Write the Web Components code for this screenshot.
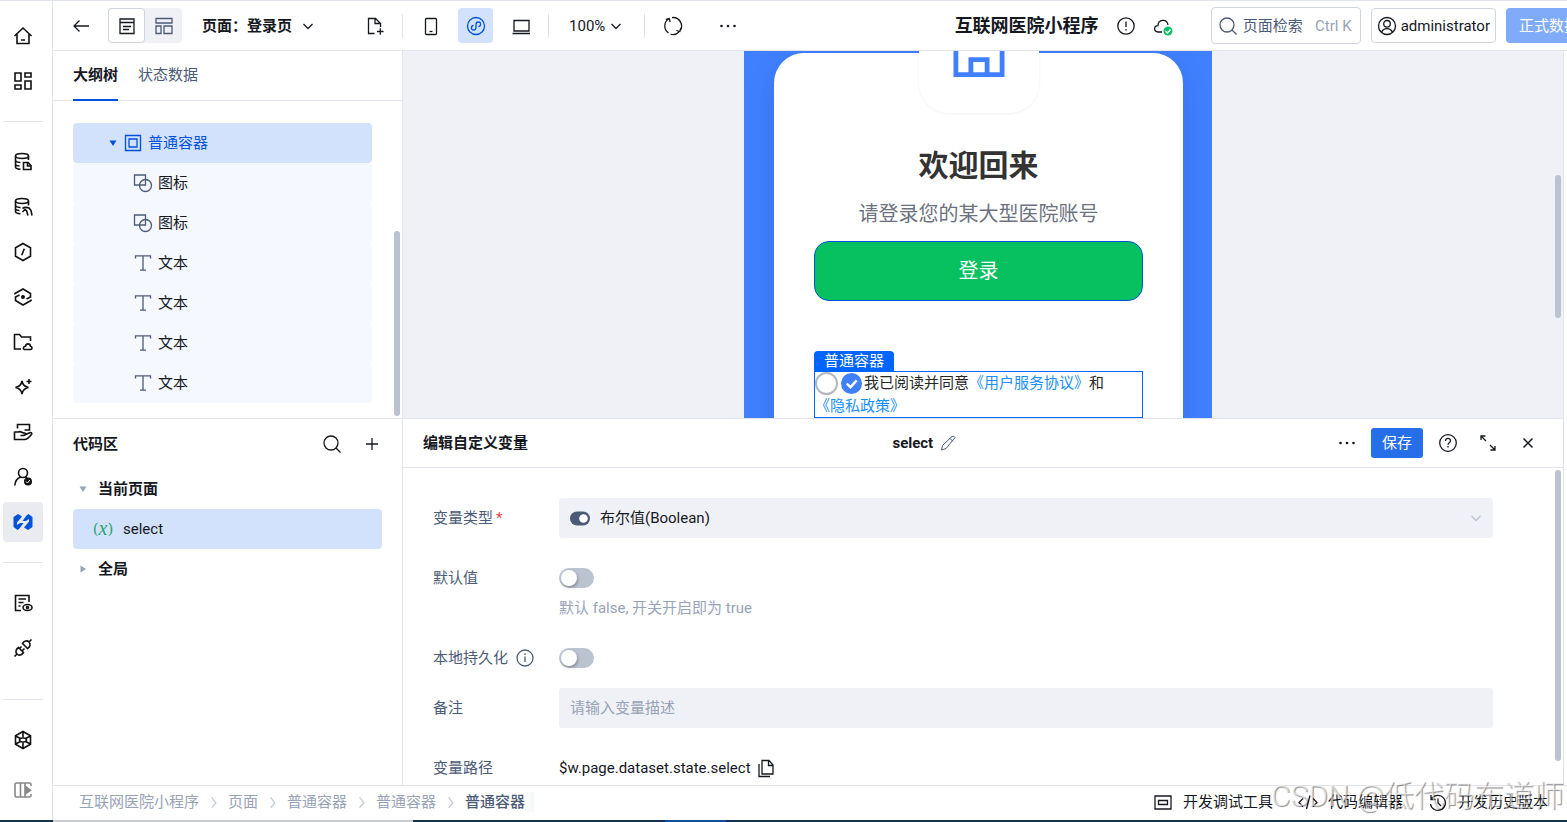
<!DOCTYPE html>
<html lang="zh-CN">
<head>
<meta charset="utf-8">
<title>互联网医院小程序</title>
<style>
:root {
    --text: #16181f;
    --muted: #4b5b76;
    --faint: #97a3b7;
    --line: #e1e4eb;
    --brand: #0052d9;
    --selected: #d3e2fc;
    --field: #f0f1f6;
    --scroll: #bbc3d0;
}

body {
    margin: 0;
    font: 15px/20px Roboto, "Noto Sans CJK SC", sans-serif;
    color: var(--text);
    background: #fff;
}
</style>
</head>
<body>
<app-shell></app-shell>

<script>
const define = (name, html, setup) => {
    const template = document.createElement('template');
    template.innerHTML = html;
    customElements.define(name, class extends HTMLElement {
        constructor() {
            super();
            this.attachShadow({mode: 'open'});
            this.shadowRoot.appendChild(template.content.cloneNode(true));
        }
        connectedCallback() {
            if (setup) setup(this, this.shadowRoot);
        }
    });
};

// every icon is drawn on a 20 x 20 grid
const icons = {
    home: '<path d="M1.5 10 10 2l8.500 8M4 8v9.500h12V8M8 14h4"/>',
    apps: '<path d="M2 2h6v8H2zM12 2h6v4h-6zM2 14h6v4H2zM12 10h6v8h-6z"/>',
    dbFile: '<ellipse cx="9" cy="4" rx="6.500" ry="2.500"/><path d="M2.500 4v11c0 1.200 2 2 5 2.200M15.500 4v4M2.500 8.500c.5 1 2.500 2 5 2M2.500 12.500c.5 1 2 1.500 4 1.500M10.500 10.500h4.500l3 3v4h-7.500zM14.500 10.500v3.500h3.500"/>',
    dbHand: '<ellipse cx="9" cy="4" rx="6.500" ry="2.500"/><path d="M2.500 4v10.500c0 1.200 2 2 5 2.200M15.500 4v4.500M2.500 8.500c.5 1 2.500 2 5 2M2.500 12c.5 1 2 1.500 4 1.500M15 18.500l-1.500-5-1.500-1-2.500 2.500M9.500 11.500c2-1.500 4-1.500 6.500-.5l2 2.500 1 5"/>',
    hexSlash: '<path d="M10 1.500 17.500 5.700v8.600L10 18.500l-7.500-4.200V5.700zM11.300 6.800 8.700 13.200"/>',
    hexDot: '<path d="M2 7.500V6.500L10 2l7.500 4.500v3.500l-4 2M18 12.500v1L10 18l-7.500-4.500v-3.500l4-2"/><circle cx="10" cy="10" r="1.200" fill="currentColor"/>',
    folder: '<path d="M8 17H1.500V2.500h5l2 2.500h9v4M11.500 17.500h6c2 0 2-3 0-3.200-.3-3.200-4.500-3.200-5 0-2.500 0-2.700 3-1 3.200z"/>',
    sparkle: '<path d="M9 4c.7 4 2.500 5.700 6.500 6.500C11.500 11.200 9.700 13 9 17c-.7-4-2.500-5.800-6.500-6.500C6.500 9.700 8.300 8 9 4zM16 2v5M13.500 4.500h5"/>',
    handCard: '<path d="M4.500 6.500V2.500h12v5.500h-5M1.500 10h4c2-1.500 3.500 1 6 1 2 0 1.500 2.500-1 2.500H7.500M1.500 9.500v8h10c3 0 5-2.500 7-5 1-1.500-1-2.500-2.500-1.500l-5.500 2.500"/>',
    userCheck: '<circle cx="10" cy="6" r="4.500"/><path d="M7.500 10C4 11.500 2 15 1.800 18.500M12.500 10l1.500 1"/><circle cx="15" cy="14.500" r="4" fill="currentColor" stroke="none"/><path stroke="#fff" stroke-width="1" d="m13 14.500 1.500 1.500 2.500-3"/>',
    wedge: '<path fill="currentColor" stroke="none" d="M.5 5 5 2l4 2.500-5 6V13l3-2h3.500l-4 5.500-2 1.500L.5 15zM19.500 15 15 18l-4-2.500 5-6V7l-3 2H9.500l4-5.500 2-1.500 4 3z"/>',
    docEye: '<path d="M8 17.500H2.500v-15h13.500V9M5.500 6h7.500M5.500 9.500h5M5.500 13h2"/><ellipse cx="14.500" cy="14.500" rx="4.500" ry="3"/><circle cx="14.500" cy="14.500" r="1"/>',
    plug: '<path d="m1.500 18.500 2.500-2.500M4 16c-2-2-1-5 1.500-6.500l5 5C9 17 6 18 4 16zM11.500 10.500l-2 2M8.500 8.500l-2 2M16 4l2.500-2.500M16 4c2 2 1 5-1.500 6.500l-5-5C11 3 14 2 16 4z"/>',
    wheel: '<path d="M10 1.500 17.500 5.700v8.600L10 18.500l-7.500-4.200V5.700zM10 1.500v6M10 12.500v6M2.500 6l5 2.500M12.500 11.500l5 2.500M17.500 6l-5 2.500M7.500 11.500l-5 2.500"/><ellipse cx="10" cy="10" rx="3.500" ry="2"/>',
    collapse: '<path d="M18 6V4.500q0-1.500-1.500-1.500h-13Q2 3 2 4.500v11Q2 17 3.500 17h13q1.500 0 1.500-1.500V14M7.500 3v14M12 3v14"/><path fill="currentColor" d="m13 7 4.500 3.200-4.500 3.200z"/>',
    back: '<path d="M18 10H3M8.500 4.500 3 10l5.500 5.500"/>',
    layoutPage: '<path d="M3 3h14v14.500h-14zM3 6.500h14M6 10.500h8M6 13.500h6"/>',
    layoutGrid: '<path d="M2 2.500h16v4.500H2zM2 10h5v7.500H2zM10 10h8v7.500h-8z"/>',
    chevron: '<path d="m5.500 8 4.500 4.500L14.500 8"/>',
    chevronRight: '<path d="m8 5 4.500 6L8 16"/>',
    fileAdd: '<path d="M9.500 17.500H3.500v-15h7l5 5v3.500M10 2.500V7.500h5.500M12 15.500h6.500M15.300 12.300v6.500"/>',
    phone: '<rect x="4.500" y="2.500" width="11" height="16" rx="1"/><path d="M8.500 15.500h3"/>',
    mini: '<circle cx="10" cy="10" r="8.500"/><path d="M7.500 9.500C5 9.500 4.500 14 7.500 14c1.500 0 2.500-1 2.500-2.500v-3C10 7 11 6 12.500 6c3 0 2.500 4.500 0 4.500"/>',
    laptop: '<path d="M3 4.500h15v10.500H3zM1.500 17.500H19"/>',
    refresh: '<path d="M6.200 2.500A8.500 8.500 0 0 0 5.500 17M7.500 18c3 1.200 6 .5 8.500-2M9 1.600a8.500 8.500 0 0 1 7.800 13.600M2.800 3.300l3.500-.8.8 3.500M17.800 12l-1 3.500-3.500-1"/>',
    dots: '<g fill="currentColor" stroke="none"><circle cx="3.500" cy="10" r="1.300"/><circle cx="10" cy="10" r="1.300"/><circle cx="16.500" cy="10" r="1.300"/></g>',
    warn: '<circle cx="10" cy="10" r="8.200"/><path d="M10 5.500V11M10 13v1.500"/>',
    cloud: '<path d="M9 16H5c-4.500-.3-4.500-6 0-6.300C5 3 14 2.500 15 9"/><circle cx="15" cy="15" r="4.500" fill="#0abf6a" stroke="none"/><path stroke="#fff" d="m12.500 15 2 2 3-3.500"/>',
    search: '<circle cx="9" cy="9" r="7"/><path d="m14 14 4.500 4.500"/>',
    user: '<circle cx="10" cy="10" r="8.500"/><circle cx="10" cy="7.800" r="3.300"/><path d="M4.500 16.300c2-5 9-5 11 0"/>',
    plus: '<path d="M10 4v12M4 10h12"/>',
    box: '<path d="M2.500 2.500h15v15h-15z"/><path d="M6 6h8v8H6z"/>',
    shapes: '<path d="M1.500 2H12.500V12H1.500z"/><circle cx="12.500" cy="12.500" r="6"/>',
    letter: '<path d="M2.500 5.500V2.800h15v2.700M10 2.800V17M7 17.200h6"/>',
    down: '<path fill="currentColor" stroke="none" d="M6.500 7.500h7L10 13z"/>',
    right: '<path fill="currentColor" stroke="none" d="M7.500 6.500v7L13 10z"/>',
    pencil: '<path stroke-width="1" d="m3.500 17 1-4.500L14 3.500q2-1 3 1L8 15.500zM12 5.500l3 3"/>',
    help: '<circle cx="10" cy="10" r="8.300"/><path d="M7.500 8c0-3.500 5-3.500 5-.3 0 2-2.500 2-2.500 4M10 13v1.500"/>',
    expand: '<path d="M3 7V3h4.500M3 3l5 5M17 13v4h-4.500M17 17l-5-5"/>',
    close: '<path stroke-width="1.500" d="m5.500 5.500 9 9M14.500 5.500l-9 9"/>',
    info: '<circle cx="10" cy="10" r="8"/><path d="M10 5.300V7M10 8.500V14"/>',
    copy: '<path d="M6 2.500h7l4 4.500v9H6zM12.500 2.500V7.500H17M3 6v12.500h11"/>',
    boolean: '<rect x="0" y="3.500" width="20" height="14" rx="7" fill="currentColor" stroke="none"/><circle cx="13.500" cy="10.500" r="4.300" fill="#fff" stroke="none"/>',
    debug: '<path d="M2 4h16v13H2zM5.500 8.500h9v4h-9z"/>',
    code: '<path d="m5 6.500-4 4 4 4M15 6.500l4 4-4 4M12 3.500 8.500 17"/>',
    history: '<path d="M3.500 7a7.500 7.500 0 1 1-1 5M3 3v4.500h4.500M10 6.500V11l3 3"/>',
    store: '<path stroke-width="1.600" d="M2.300 2v15.200h15.400V2M7.300 17.200v-5h5.400v5"/>',
    check: '<circle cx="10" cy="10" r="10" fill="currentColor" stroke="none"/><path stroke="#fff" stroke-width="2.300" d="m5.500 10 3.500 3.500 6-6.500"/>'
};

customElements.define('ui-icon', class extends HTMLElement {
    constructor() {
        super();
        this.attachShadow({mode: 'open'});
    }
    connectedCallback() {
        this.shadowRoot.innerHTML = `
<style>
:host { display: inline-flex; flex: none; width: 20px; height: 20px; }
svg { width: 100%; height: 100%; fill: none; stroke: currentColor; stroke-width: var(--stroke, 1.3); }
</style>
<svg viewBox="0 0 20 20" aria-hidden="true">${icons[this.getAttribute('name')]}</svg>`;
    }
});

define('icon-button', `
<style>
:host { display: block; flex: none; width: 35px; height: 35px; }
button {
    display: flex;
    align-items: center;
    justify-content: center;
    width: 100%;
    height: 100%;
    padding: 0;
    border: 0;
    border-radius: 4px;
    color: inherit;
    background: none;
}
:host([active]) button { color: var(--brand); background: var(--selected); }
</style>
<button><ui-icon></ui-icon></button>
`, (host, root) => {
    root.querySelector('button').setAttribute('aria-label', host.getAttribute('label') || host.getAttribute('icon'));
    const icon = document.createElement('ui-icon');
    icon.setAttribute('name', host.getAttribute('icon'));
    root.querySelector('ui-icon').replaceWith(icon);
});

define('nav-rail', `
<style>
:host {
    display: flex;
    flex-direction: column;
    gap: 5px;
    width: 49px;
    padding: 15px 0 10px 3px;
    border-top: 1px solid var(--line);
    border-right: 1px solid var(--line);
    color: #111;
    --stroke: 1.6;
}
icon-button { width: 40px; height: 40px; }
icon-button[active] { --selected: #e9ebf1; }
hr { width: 40px; margin: 15px 0; border: 0; border-top: 1px solid var(--line); }
.bottom { display: flex; flex-direction: column; gap: 10px; margin-top: auto; }
.bottom hr { margin: 0 0 10px; }
.off { color: #888; }
</style>
<icon-button icon="home"></icon-button>
<icon-button icon="apps"></icon-button>
<hr>
<icon-button icon="dbFile"></icon-button>
<icon-button icon="dbHand"></icon-button>
<icon-button icon="hexSlash"></icon-button>
<icon-button icon="hexDot"></icon-button>
<icon-button icon="folder"></icon-button>
<icon-button icon="sparkle"></icon-button>
<icon-button icon="handCard"></icon-button>
<icon-button icon="userCheck"></icon-button>
<icon-button icon="wedge" active></icon-button>
<hr>
<icon-button icon="docEye"></icon-button>
<icon-button icon="plug"></icon-button>
<div class="bottom">
    <hr>
    <icon-button icon="wheel"></icon-button>
    <icon-button class="off" icon="collapse"></icon-button>
</div>
`);

define('top-bar', `
<style>
:host {
    display: flex;
    align-items: center;
    gap: 10px;
    height: 49px;
    padding-left: 10px;
    border-top: 1px solid var(--line);
    border-bottom: 1px solid var(--line);
    overflow: hidden;
    white-space: nowrap;
}
select, input { font: inherit; color: inherit; border: 0; padding: 0; background: none; outline: none; appearance: none; }
.views { display: flex; border-radius: 4px; background: var(--field); }
.views icon-button { width: 37px; }
.views icon-button:first-child { box-shadow: inset 0 0 0 1px #d0d5e0; border-radius: 4px; background: #fff; }
.views icon-button:last-child { color: var(--muted); }
.page { display: flex; align-items: center; gap: 5px; margin-left: 10px; font-weight: 700; }
.page label { margin-right: -5px; }
.file { margin-left: 29px; }
.split { width: 1px; height: 24px; background: var(--line); }
.zoom { display: flex; align-items: center; width: 65px; padding-left: 10px; }
.more { margin-left: 10px; }
.actions { display: flex; align-items: center; gap: 10px; margin: 0 -25px 0 auto; }
h1 { margin: 0; font-size: 18px; line-height: 24px; }
.cloud { margin-left: -8px; }
.search {
    display: flex;
    align-items: center;
    gap: 5px;
    box-sizing: border-box;
    width: 150px;
    height: 37px;
    margin-left: 20px;
    padding: 0 8px 0 6px;
    border: 1px solid #d0d5e0;
    border-radius: 4px;
    color: var(--muted);
}
.search input { flex: 1; min-width: 0; }
.search input::placeholder { color: var(--muted); opacity: 1; }
kbd { font: inherit; color: var(--faint); }
.user, .publish { height: 35px; font: inherit; border-radius: 4px; }
.user { display: flex; align-items: center; gap: 4px; padding: 0 5px; border: 1px solid #d0d5e0; color: inherit; background: #fff; }
.publish { padding: 0 13px; border: 0; color: #fff; background: #7fabf8; }
</style>
<icon-button icon="back" label="返回"></icon-button>
<div class="views">
    <icon-button icon="layoutPage"></icon-button>
    <icon-button icon="layoutGrid"></icon-button>
</div>
<div class="page">
    <label for="page">页面：</label>
    <select id="page"><option>登录页</option></select>
    <ui-icon name="chevron"></ui-icon>
</div>
<icon-button class="file" icon="fileAdd"></icon-button>
<span class="split"></span>
<icon-button icon="phone"></icon-button>
<icon-button icon="mini" active></icon-button>
<icon-button icon="laptop"></icon-button>
<span class="split"></span>
<div class="zoom">
    <select aria-label="缩放"><option>100%</option></select>
    <ui-icon name="chevron"></ui-icon>
</div>
<span class="split"></span>
<icon-button icon="refresh"></icon-button>
<icon-button class="more" icon="dots"></icon-button>
<div class="actions">
    <h1>互联网医院小程序</h1>
    <icon-button icon="warn"></icon-button>
    <icon-button class="cloud" icon="cloud"></icon-button>
    <div class="search">
        <ui-icon name="search"></ui-icon>
        <input type="text" placeholder="页面检索" aria-label="页面检索">
        <kbd>Ctrl K</kbd>
    </div>
    <button class="user"><ui-icon name="user"></ui-icon>administrator</button>
    <button class="publish">正式数据</button>
</div>
`);

define('tree-row', `
<style>
:host {
    display: flex;
    align-items: center;
    gap: 5px;
    height: 40px;
    border-radius: 4px;
}
:host([selected]) { background: var(--selected); }
</style>
<slot></slot>
`);

define('scroll-thumb', `
<style>
/* floats over the right edge of its panel */
:host { position: absolute; right: 2px; width: 6px; border-radius: 3px; background: var(--scroll); }
</style>
`);

define('outline-panel', `
<style>
:host { display: block; position: relative; overflow: hidden; }
nav { display: flex; gap: 20px; height: 49px; padding-left: 20px; border-bottom: 1px solid var(--line); }
nav button { padding: 0; border: 0; margin-bottom: -1px; border-bottom: 2px solid transparent; font: inherit; color: var(--muted); background: none; }
nav .on { font-weight: 700; color: var(--text); border-color: var(--brand); }
.tree { margin: 22px 30px 0 20px; }
tree-row { padding-left: 60px; background: #f5f8ff; }
tree-row ui-icon { color: var(--muted); }
tree-row[selected] { padding-left: 30px; color: var(--brand); background: var(--selected); }
tree-row[selected] ui-icon { color: var(--brand); }
.caret { margin-right: -5px; }
scroll-thumb { top: 180px; bottom: 2px; }
</style>
<nav>
    <button class="on">大纲树</button>
    <button>状态数据</button>
</nav>
<div class="tree">
    <tree-row selected><ui-icon class="caret" name="down"></ui-icon><ui-icon name="box"></ui-icon>普通容器</tree-row>
    <tree-row><ui-icon name="shapes"></ui-icon>图标</tree-row>
    <tree-row><ui-icon name="shapes"></ui-icon>图标</tree-row>
    <tree-row><ui-icon name="letter"></ui-icon>文本</tree-row>
    <tree-row><ui-icon name="letter"></ui-icon>文本</tree-row>
    <tree-row><ui-icon name="letter"></ui-icon>文本</tree-row>
    <tree-row><ui-icon name="letter"></ui-icon>文本</tree-row>
</div>
<scroll-thumb></scroll-thumb>
`);

define('code-panel', `
<style>
:host { display: block; border-top: 1px solid var(--line); }
header { display: flex; align-items: center; gap: 5px; height: 50px; padding: 0 13px 0 20px; font-weight: 700; }
header span { flex: 1; }
.tree { margin: 0 20px; }
.group { font-weight: 700; }
.group ui-icon { color: var(--faint); }
.item { gap: 10px; padding-left: 20px; }
</style>
<header>
    <span>代码区</span>
    <icon-button icon="search" label="搜索"></icon-button>
    <icon-button icon="plus" label="新增"></icon-button>
</header>
<div class="tree">
    <tree-row class="group"><ui-icon name="down"></ui-icon>当前页面</tree-row>
    <tree-row class="item" selected><ui-var></ui-var>select</tree-row>
    <tree-row class="group"><ui-icon name="right"></ui-icon>全局</tree-row>
</div>
`);

define('ui-var', `
<style>
:host { display: flex; justify-content: center; width: 20px; color: #2ba471; font: 15px/20px "DejaVu Serif", serif; }
i { font-family: "Liberation Serif", serif; font-size: 20px; line-height: 18px; }
</style>
(<i>x</i>)
`);

define('phone-preview', `
<style>
:host {
    display: block;
    position: relative;
    overflow: hidden;
    padding-right: 10px;
    border-left: 1px solid var(--line);
    background: #eff1f6;
}
.phone { width: 409px; height: 100%; margin: 0 auto; padding: 2px 29px 0 30px; background: #4080ff; }
.card {
    box-sizing: border-box;
    height: 600px;
    padding: 0 40px;
    border-radius: 30px;
    background: #fff;
    box-shadow: 0 10px 30px rgba(0, 0, 0, .1);
    text-align: center;
}
/* the badge straddles the top edge of the card */
.logo {
    display: flex;
    align-items: center;
    justify-content: center;
    width: 120px;
    height: 120px;
    margin: 0 auto -30px;
    border-radius: 30px;
    color: #4080ff;
    background: #fff;
    box-shadow: 0 1px 3px rgba(0, 0, 0, .06);
    transform: translateY(-50%);
}
.logo ui-icon { width: 60px; height: 60px; }
h2 { margin: 0; font-size: 30px; line-height: 46px; color: #333; }
p { margin: 10px 0 12px; font-size: 20px; line-height: 30px; color: #6b7280; }
.login { width: 100%; height: 60px; border: 1px solid #0052d9; border-radius: 15px; font: inherit; font-size: 20px; color: #fff; background: #07c160; }
.agree { margin-top: 50px; text-align: left; color: #262626; }
.tag { width: fit-content; padding: 0 10px; border-radius: 4px 4px 0 0; color: #fff; background: #0064ff; }
.frame { box-sizing: border-box; height: 47px; border: 1px solid #0064ff; line-height: 23px; }
.frame ui-icon { width: 21px; height: 21px; margin: 1px 2px 0 0; vertical-align: top; color: #4080ff; }
.frame input { appearance: none; box-sizing: border-box; width: 23px; height: 23px; margin: 0 3px 0 0; border: 2px solid #b4b8be; border-radius: 50%; vertical-align: top; }
.frame a { display: inline-block; color: #1890ff; text-decoration: none; text-spacing-trim: space-all; }
scroll-thumb { top: 124px; height: 143px; }
</style>
<div class="phone">
    <div class="card">
        <div class="logo"><ui-icon name="store"></ui-icon></div>
        <h2>欢迎回来</h2>
        <p>请登录您的某大型医院账号</p>
        <button class="login">登录</button>
        <div class="agree">
            <div class="tag">普通容器</div>
            <div class="frame"><input type="radio" id="agree"><ui-icon name="check"></ui-icon><label for="agree">我已阅读并同意</label><a href="#terms">《用户服务协议》</a>和<a href="#privacy">《隐私政策》</a></div>
        </div>
    </div>
</div>
<scroll-thumb></scroll-thumb>
`);

define('form-row', `
<style>
:host { display: grid; flex: none; grid-template-columns: 126px minmax(0, 1fr); }
</style>
<slot name="label"></slot>
<div><slot></slot></div>
`);

define('variable-editor', `
<style>
:host {
    display: flex;
    flex-direction: column;
    position: relative;
    min-height: 0;
    overflow: hidden;
    border-top: 1px solid var(--line);
    border-left: 1px solid var(--line);
}
header { display: grid; flex: none; grid-template-columns: 4fr auto 5fr; align-items: center; height: 48px; padding: 0 18px 0 20px; border-bottom: 1px solid var(--line); font-weight: 700; }
.name, .tools { display: flex; align-items: center; gap: 5px; }
.name ui-icon { color: var(--muted); }
.tools { justify-content: flex-end; }
.tools button { width: 52px; height: 30px; margin: 0 2px; padding: 0; border: 0; border-radius: 3px; font: inherit; font-weight: 400; color: #fff; background: #266fe8; }
form { display: flex; flex-direction: column; gap: 20px; padding: 30px 70px 0 30px; }
label { display: flex; align-items: center; height: 40px; color: var(--muted); }
em { margin-left: 3px; font-style: normal; color: #e54545; }
label ui-icon { margin-left: 7px; }
.field { display: flex; align-items: center; gap: 10px; height: 40px; padding: 0 7px 0 11px; border-radius: 3px; background: var(--field); }
.field select, .field input { flex: 1; height: 100%; min-width: 0; padding: 0; border: 0; outline: none; appearance: none; font: inherit; color: var(--text); background: none; }
.field input::placeholder { color: var(--faint); opacity: 1; }
.arrow { color: #bbc3d0; }
.bool { color: var(--muted); }
.switch { appearance: none; display: block; width: 35px; height: 20px; margin: 10px 0; border-radius: 10px; background: #bbc3d0; }
.switch::before { content: ""; display: block; width: 16px; height: 16px; margin: 2px; border-radius: 50%; background: #fff; box-shadow: 1px 2px 3px rgba(0, 0, 0, .25); }
small { display: block; font-size: 15px; color: var(--faint); }
.tight { margin-bottom: -10px; }
.path { display: flex; align-items: center; gap: 5px; height: 40px; }
scroll-thumb { top: 51px; bottom: 24px; }
</style>
<header>
    <span>编辑自定义变量</span>
    <div class="name">select <ui-icon name="pencil"></ui-icon></div>
    <div class="tools">
        <icon-button icon="dots" label="更多"></icon-button>
        <button>保存</button>
        <icon-button icon="help" label="帮助"></icon-button>
        <icon-button icon="expand" label="展开"></icon-button>
        <icon-button icon="close" label="关闭"></icon-button>
    </div>
</header>
<form>
    <form-row>
        <label slot="label" for="type">变量类型<em>*</em></label>
        <div class="field">
            <ui-icon class="bool" name="boolean"></ui-icon>
            <select id="type"><option>布尔值(Boolean)</option></select>
            <ui-icon class="arrow" name="chevron"></ui-icon>
        </div>
    </form-row>
    <form-row>
        <label slot="label" for="value">默认值</label>
        <input class="switch" type="checkbox" id="value">
        <small>默认 false, 开关开启即为 true</small>
    </form-row>
    <form-row class="tight">
        <label slot="label" for="persist">本地持久化<ui-icon name="info"></ui-icon></label>
        <input class="switch" type="checkbox" id="persist">
    </form-row>
    <form-row>
        <label slot="label" for="remark">备注</label>
        <div class="field"><input type="text" id="remark" placeholder="请输入变量描述"></div>
    </form-row>
    <form-row>
        <label slot="label">变量路径</label>
        <div class="path">$w.page.dataset.state.select <ui-icon name="copy"></ui-icon></div>
    </form-row>
</form>
<scroll-thumb></scroll-thumb>
`);

define('status-bar', `
<style>
:host { display: flex; align-items: center; height: 32px; padding: 0 19px 2px 26px; border-top: 1px solid var(--line); white-space: nowrap; }
nav { display: flex; align-items: center; gap: 5px; flex: 1; color: #c0c7d4; }
nav ui-icon { width: 19px; }
a { color: var(--faint); text-decoration: none; }
a:last-child { padding-right: 9px; color: var(--muted); font-weight: 500; background: linear-gradient(90deg, transparent 85%, #f5f6f9); }
.tools { display: flex; gap: 25px; }
button { display: flex; align-items: center; gap: 10px; padding: 0; border: 0; font: inherit; color: inherit; background: none; }
</style>
<nav>
    <a href="#app">互联网医院小程序</a><ui-icon name="chevronRight"></ui-icon>
    <a href="#page">页面</a><ui-icon name="chevronRight"></ui-icon>
    <a href="#outer">普通容器</a><ui-icon name="chevronRight"></ui-icon>
    <a href="#inner">普通容器</a><ui-icon name="chevronRight"></ui-icon>
    <a href="#current">普通容器</a>
</nav>
<div class="tools">
    <button><ui-icon name="debug"></ui-icon>开发调试工具</button>
    <button><ui-icon name="code"></ui-icon>代码编辑器</button>
    <button><ui-icon name="history"></ui-icon>开发历史版本</button>
</div>
`);

define('water-mark', `
<style>
/* lies over the status bar */
:host {
    position: absolute;
    right: 3px;
    bottom: 6px;
    font: 30px/40px Roboto, "Noto Sans CJK SC", sans-serif;
    font-weight: 300;
    color: rgba(255, 255, 255, .6);
    text-shadow: 1px 1px 1px rgba(0, 0, 0, .45);
    pointer-events: none;
    white-space: nowrap;
}
</style>
<slot></slot>
`);

define('app-shell', `
<style>
:host {
    display: grid;
    grid-template: minmax(0, 1fr) 2px / auto minmax(0, 1fr);
    position: relative;
    height: 100vh;
    overflow: hidden;
}
.work { display: flex; flex-direction: column; min-height: 0; }
main {
    flex: 1;
    display: grid;
    grid-template: minmax(0, 1fr) minmax(0, 1fr) / 349px minmax(0, 1fr);
    min-height: 0;
    margin-right: 3px;
    border-right: 1px solid var(--line);
}
.edge { grid-column: 1 / -1; background: linear-gradient(90deg, #12344f 53px, #c9ccd2 53px 413px, #12344f 413px 665px, #0b5394 665px 726px, #12344f 726px); }
</style>
<nav-rail></nav-rail>
<div class="work">
    <top-bar></top-bar>
    <main>
        <outline-panel></outline-panel>
        <phone-preview></phone-preview>
        <code-panel></code-panel>
        <variable-editor></variable-editor>
    </main>
    <status-bar></status-bar>
</div>
<div class="edge"></div>
<water-mark>CSDN @低代码布道师</water-mark>
`);
</script>
</body>
</html>
